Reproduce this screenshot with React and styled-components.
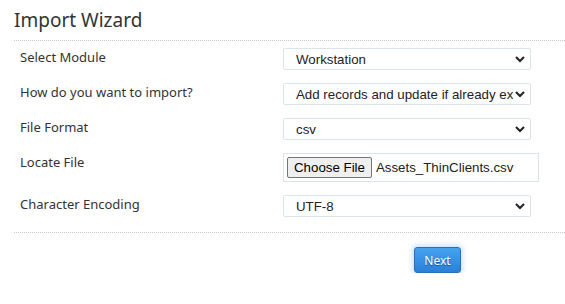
import React from "react"
import styled, { createGlobalStyle } from "styled-components"

const Global = createGlobalStyle`
  body {
    margin: 0;
    background: #fff;
    font-family: "Noto Sans", "Open Sans", sans-serif;
    color: #333;
  }
`

const Page = styled.div`
  padding: 6px 0 0 14px;
`

const Title = styled.h1`
  margin: 0;
  font-size: 19px;
  font-weight: 400;
  line-height: 28px;
  color: #333;
  padding-bottom: 6px;
  border-bottom: 1px dotted #c8c8c8;
`

const Form = styled.div`
  padding: 7px 0 15px 6px;
  border-bottom: 1px dotted #c8c8c8;
  display: flex;
  flex-direction: column;
  gap: 13px;
`

const Row = styled.div`
  display: grid;
  grid-template-columns: 263px 1fr;
  align-items: start;
`

const Label = styled.label`
  font-size: 13px;
  line-height: 18px;
  color: #333;
`

const SelectBox = styled.div`
  width: 248px;
  height: 22px;
  box-sizing: border-box;
  border: 1px solid #dde3ea;
  border-radius: 2px;
  display: flex;
  align-items: center;
  padding-left: 12px;
  font-family: "Liberation Sans", Arial, sans-serif;
  font-size: 13.3px;
  color: #222;
  white-space: nowrap;
  overflow: hidden;
`

const Value = styled.span`
  flex: 1;
  overflow: hidden;
`

const Chevron = styled.svg`
  flex: none;
  width: 10px;
  height: 8px;
  margin: 0 5px 0 2px;
`

const FileBox = styled.div`
  width: 256px;
  height: 29px;
  box-sizing: border-box;
  border: 1px solid #dde3ea;
  display: flex;
  align-items: center;
  padding-left: 3px;
  gap: 4px;
  font-family: "Liberation Sans", Arial, sans-serif;
  font-size: 13.3px;
  color: #222;
`

const FileButton = styled.button`
  height: 21px;
  padding: 0 6px;
  border: 1px solid #767676;
  border-radius: 2px;
  background: #efefef;
  font-family: inherit;
  font-size: 13.3px;
  color: #000;
`

const Footer = styled.div`
  display: flex;
  padding: 14px 0 0 400px;
`

const NextButton = styled.button`
  width: 47px;
  height: 26px;
  border: 1px solid #2a6fb8;
  border-radius: 3px;
  background: linear-gradient(#45a3f0, #2a80d8);
  box-shadow: 0 0 5px 2px rgba(80, 160, 255, 0.3);
  color: #fff;
  font-family: "Noto Sans", sans-serif;
  font-size: 12px;
  text-shadow: 0 1px 1px rgba(0, 40, 100, 0.6);
`

function Select({ value }) {
  return (
    <SelectBox>
      <Value>{value}</Value>
      <Chevron viewBox="0 0 10 8">
        <path d="M1 2 L5 6 L9 2" stroke="#222" strokeWidth="2" fill="none" />
      </Chevron>
    </SelectBox>
  )
}

export default function App() {
  return (
    <>
      <Global />
      <Page>
        <Title>Import Wizard</Title>
        <Form>
          <Row>
            <Label>Select Module</Label>
            <Select value="Workstation" />
          </Row>
          <Row>
            <Label>How do you want to import?</Label>
            <Select value="Add records and update if already existing" />
          </Row>
          <Row>
            <Label>File Format</Label>
            <Select value="csv" />
          </Row>
          <Row>
            <Label>Locate File</Label>
            <FileBox>
              <FileButton>Choose File</FileButton>
              <span>Assets_ThinClients.csv</span>
            </FileBox>
          </Row>
          <Row>
            <Label>Character Encoding</Label>
            <Select value="UTF-8" />
          </Row>
        </Form>
        <Footer>
          <NextButton>Next</NextButton>
        </Footer>
      </Page>
    </>
  )
}
